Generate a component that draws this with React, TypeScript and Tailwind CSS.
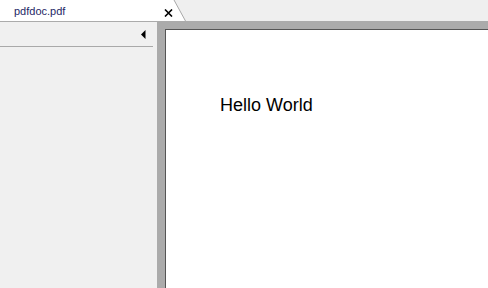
import React from "react";

export default function App() {
  return (
    <div className="w-[488px] h-[288px] overflow-hidden flex flex-col bg-[#efefef] font-['Liberation_Sans',Arial,sans-serif]">
      {/* Tab bar */}
      <div className="h-[21px] flex shrink-0 bg-[#efefef]">
        <div className="relative w-[188px] h-[21px]">
          <svg className="absolute inset-0" width="188" height="21" viewBox="0 0 188 21">
            <polygon points="0,0 174,0 185.5,21 0,21" fill="#ffffff" />
            <line x1="174" y1="0" x2="185.5" y2="21" stroke="#a8a8a8" strokeWidth="1" />
          </svg>
          <div className="relative w-[173px] flex justify-between pl-[14px] pt-[6px]">
            <span className="text-[11px] leading-[11px] text-[#1f1f66]">pdfdoc.pdf</span>
            <svg width="9" height="8" viewBox="0 0 9 8" className="mt-[3px]">
              <path d="M1 0.5 L8 7.5 M8 0.5 L1 7.5" stroke="#000" strokeWidth="1.6" />
            </svg>
          </div>
        </div>
      </div>
      {/* Body */}
      <div className="flex flex-1 min-h-0">
        <div className="w-[157px] shrink-0 bg-[#f0f0f0] border-t border-[#ababab] flex flex-col">
          <div className="h-[24px] flex items-start">
            <svg width="5" height="9" viewBox="0 0 5 9" className="ml-[141px] mt-[8px]">
              <polygon points="0,4.5 4.5,0 4.5,9" fill="#000" />
            </svg>
          </div>
          <div className="w-[153px] h-px bg-[#a9a9a9]" />
        </div>
        <div className="flex-1 bg-[#ababab] pt-[8px] pl-[8px] flex">
          <div className="flex-1 bg-white border-t border-l border-[#555555] pt-[66px] pl-[54px]">
            <div className="text-[18px] leading-[18px] text-black">Hello World</div>
          </div>
        </div>
      </div>
    </div>
  );
}
